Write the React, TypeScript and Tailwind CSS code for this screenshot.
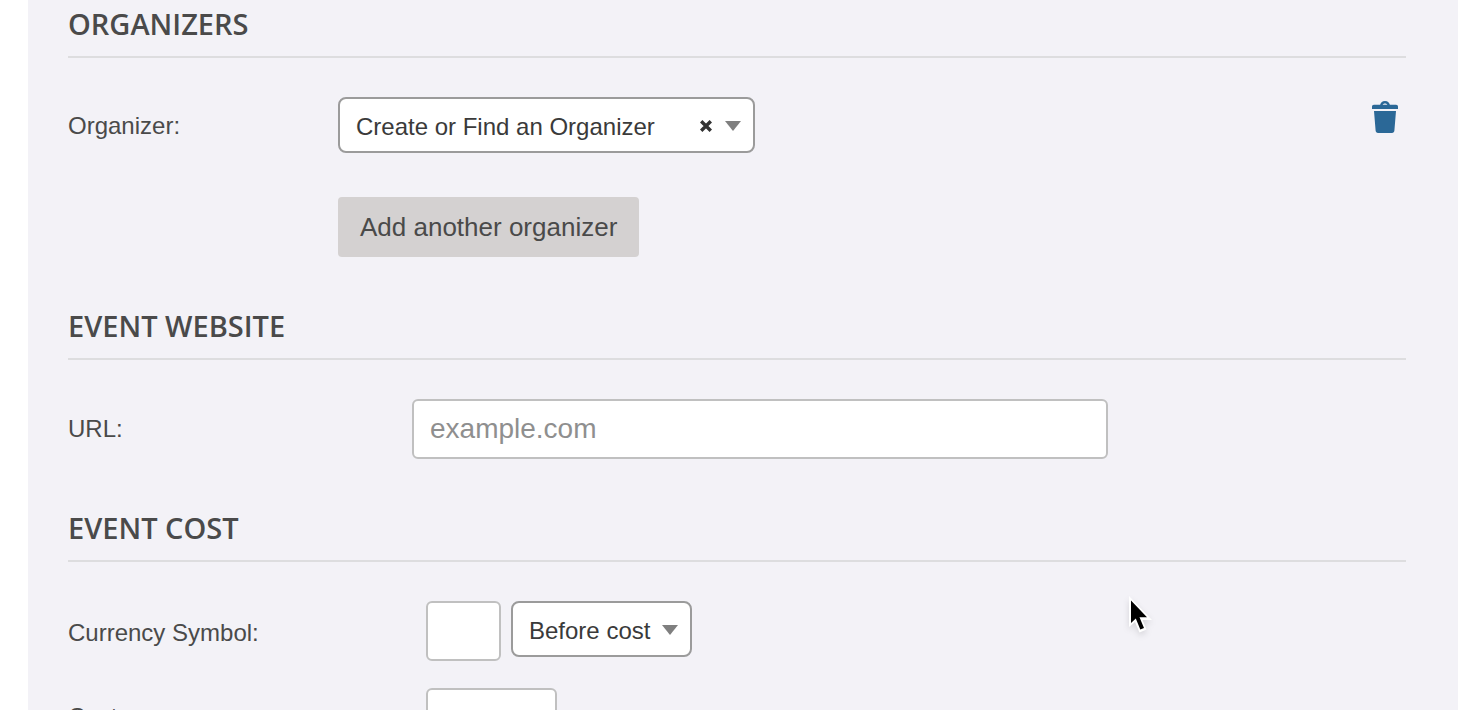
import { ReactNode } from "react";

const selectClass =
  "h-14 w-full appearance-none rounded-lg border-2 border-[#9b9b9b] bg-white pt-1 pl-4 text-2xl text-[#3a3a3a] outline-none";
const inputClass =
  "h-[60px] rounded-md border-2 border-[#c0c0c0] bg-white px-4 text-[28px] text-[#3a3a3a] outline-none placeholder:text-[#8f8f8f] placeholder:opacity-100";

function Section({ title, children }: { title: string; children: ReactNode }) {
  return (
    <section>
      <h2
        className="border-b-2 border-[#dddddf] pb-3 text-[29px] leading-10 font-semibold text-[#4a4a4a] uppercase"
        style={{ fontFamily: '"Open Sans", sans-serif' }}
      >
        {title}
      </h2>
      {children}
    </section>
  );
}

function Caret() {
  return (
    <svg
      className="pointer-events-none absolute top-6 right-3.5 h-2.5 w-4"
      viewBox="0 0 16 10"
      fill="#7f7f7f"
      aria-hidden="true"
    >
      <path d="M0 0h16L8 10z" />
    </svg>
  );
}

function TrashIcon() {
  return (
    <svg width="26" height="32" viewBox="0 0 26 32" fill="#2b6897" aria-hidden="true">
      <path d="M8 4.500C8.300 1.800 10.200 0 13 0s4.700 1.800 5 4.500h-2.500c-.3-1.400-1.200-2-2.500-2s-2.200.6-2.500 2z" />
      <path d="M2 3.700h22c1.300 0 2 .8 2 2v2.300H0V5.700c0-1.200.7-2 2-2z" />
      <path d="M2 10h22l-1.600 19.600c-.1 1.400-1 2.400-2.400 2.400H6c-1.400 0-2.300-1-2.400-2.400z" />
    </svg>
  );
}

function Pointer() {
  return (
    <svg
      className="pointer-events-none absolute top-[595px] left-[1127px] drop-shadow-md"
      width="28"
      height="40"
      viewBox="0 0 28 40"
      aria-hidden="true"
    >
      <path d="M2 1v31l6-5 4.500 10.500 7-3L15.500 25H25z" fill="#fff" />
      <path d="M4 5.500v22.500l4.800-4.500 4.500 11 3.700-1.600-4.500-10.700h7.500z" fill="#000" />
    </svg>
  );
}

export default function App() {
  return (
    <div
      className="relative h-screen overflow-hidden bg-white pr-1 pl-7 text-2xl text-[#4a4a4a]"
      style={{ fontFamily: '"Liberation Sans", Arial, sans-serif' }}
    >
      <form className="flex min-h-full flex-col gap-[49px] bg-[#f3f2f7] pt-1 pr-[52px] pl-10">
        <Section title="Organizers">
          <div className="flex items-start pt-[39px]">
            <label htmlFor="organizer" className="w-[270px] shrink-0 leading-[58px]">
              Organizer:
            </label>
            <div className="flex-1">
              <div className="relative max-w-[417px]">
                <select id="organizer" className={selectClass}>
                  <option>Create or Find an Organizer</option>
                </select>
                <button type="button" aria-label="Clear organizer" className="absolute top-[23px] right-[43px]">
                  <svg width="12" height="12" viewBox="0 0 12 12" stroke="#333" strokeWidth="3.4" aria-hidden="true">
                    <path d="M1.200 1.200l9.600 9.600M10.800 1.200l-9.600 9.600" />
                  </svg>
                </button>
                <Caret />
              </div>
              <button
                type="button"
                className="mt-11 h-[60px] rounded bg-[#d4d1d1] px-[22px] text-[26px] text-[#4a4a4a]"
              >
                Add another organizer
              </button>
            </div>
            <button type="button" aria-label="Delete organizer" className="mt-1 mr-2">
              <TrashIcon />
            </button>
          </div>
        </Section>

        <Section title="Event Website">
          <div className="flex items-center pt-[39px]">
            <label htmlFor="url" className="w-[344px] shrink-0">
              URL:
            </label>
            <input id="url" type="text" placeholder="example.com" className={`${inputClass} w-full max-w-[696px]`} />
          </div>
        </Section>

        <Section title="Event Cost">
          <div className="flex flex-col gap-[23px] pt-[39px]">
            <div className="flex items-start">
              <label htmlFor="symbol" className="w-[358px] shrink-0 leading-[64px]">
                Currency Symbol:
              </label>
              <input id="symbol" type="text" className={`${inputClass} mr-2.5 w-[75px]`} />
              <div className="relative w-[181px]">
                <select aria-label="Currency symbol position" className={selectClass}>
                  <option>Before cost</option>
                  <option>After cost</option>
                </select>
                <Caret />
              </div>
            </div>
            <div className="flex items-start">
              <label htmlFor="cost" className="w-[358px] shrink-0 leading-[58px]">
                Cost:
              </label>
              <input id="cost" type="text" className={`${inputClass} w-[131px]`} />
            </div>
          </div>
        </Section>
      </form>
      <Pointer />
    </div>
  );
}
